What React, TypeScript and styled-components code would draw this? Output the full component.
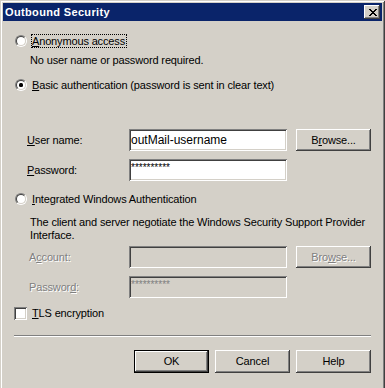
import React from "react";
import styled, { createGlobalStyle, css } from "styled-components";

const FACE = "#d4d0c8";
const SHADOW = "#808080";
const DARK = "#404040";
const TITLE = "#0a246a";

const GlobalStyle = createGlobalStyle`
  html, body { margin: 0; padding: 0; background: ${FACE}; overflow: hidden; }
  body {
    font-family: "Liberation Sans", Arial, sans-serif;
    font-size: 11px;
    letter-spacing: -0.15px;
    color: #000;
  }
  * { box-sizing: border-box; }
  u { text-underline-offset: 1px; }
`;

const raised = css`
  box-shadow: inset -1px -1px 0 ${DARK}, inset 1px 1px 0 #fff,
    inset -2px -2px 0 ${SHADOW}, inset 2px 2px 0 ${FACE};
`;

const sunken = css`
  box-shadow: inset 1px 1px 0 ${SHADOW}, inset -1px -1px 0 #fff,
    inset 2px 2px 0 ${DARK}, inset -2px -2px 0 ${FACE};
`;

const disabledText = css`
  color: ${SHADOW};
  text-shadow: 1px 1px 0 #fff;
`;

const Window = styled.div`
  width: 385px;
  height: 392px;
  padding: 3px;
  background: ${FACE};
  display: flex;
  flex-direction: column;
  box-shadow: inset 1px 1px 0 ${FACE}, inset -1px -1px 0 ${DARK},
    inset 2px 2px 0 #fff, inset -2px -2px 0 ${SHADOW};
`;

const TitleBar = styled.div`
  height: 18px;
  flex: none;
  background: ${TITLE};
  display: flex;
  align-items: center;
  justify-content: space-between;
  padding: 0 2px;
`;

const Title = styled.span`
  color: #fff;
  font-weight: bold;
  font-size: 11px;
  letter-spacing: 0.35px;
  line-height: 18px;
`;

const CloseButton = styled.div`
  width: 16px;
  height: 14px;
  background: ${FACE};
  ${raised};
  display: flex;
  align-items: center;
  justify-content: center;
  padding-left: 1px;
`;

const Client = styled.div`
  display: flex;
  flex-direction: column;
  padding: 0 11px;
`;

const OptionRow = styled.div<{ $mt: number }>`
  display: flex;
  align-items: center;
  height: 16px;
  margin-top: ${(p) => p.$mt}px;
`;

const RadioOuter = styled.span`
  flex: none;
  width: 12px;
  height: 12px;
  margin-left: 1px;
  border-radius: 50%;
  border: 1px solid;
  border-color: ${SHADOW} #fff #fff ${SHADOW};
  display: flex;
`;

const RadioInner = styled.span`
  width: 10px;
  height: 10px;
  border-radius: 50%;
  border: 1px solid;
  border-color: ${DARK} ${FACE} ${FACE} ${DARK};
  background: #fff;
  display: flex;
  align-items: center;
  justify-content: center;
`;

const RadioDot = styled.span`
  width: 4px;
  height: 4px;
  border-radius: 1.5px;
  background: #000;
`;

const CheckBox = styled.span`
  flex: none;
  width: 13px;
  height: 13px;
  background: #fff;
  ${sunken};
`;

const OptionLabel = styled.span<{ $focused?: boolean }>`
  margin-left: 4px;
  padding: 1px 1px;
  line-height: 12px;
  white-space: nowrap;
  ${(p) =>
    p.$focused &&
    css`
      outline: 1px dotted #000;
      outline-offset: -1px;
      padding: 1px 2px 1px 1px;
    `}
`;

const Description = styled.div<{ $mt: number }>`
  margin-top: ${(p) => p.$mt}px;
  margin-left: 16px;
  width: 341px;
  line-height: 13px;
`;

const FieldRow = styled.div<{ $mt: number; $indent: number }>`
  display: flex;
  align-items: center;
  height: 22px;
  margin-top: ${(p) => p.$mt}px;
  padding-left: ${(p) => p.$indent}px;
`;

const FieldLabel = styled.span<{ $w: number; $disabled?: boolean }>`
  flex: none;
  width: ${(p) => p.$w}px;
  line-height: 13px;
  ${(p) => p.$disabled && disabledText};
`;

const TextBox = styled.div<{ $disabled?: boolean }>`
  flex: none;
  width: 158px;
  height: 22px;
  ${sunken};
  background: ${(p) => (p.$disabled ? FACE : "#fff")};
  padding: 0 2px;
  display: flex;
  align-items: center;
  font-size: 12px;
  letter-spacing: 0;
`;

const PasswordBox = styled(TextBox)`
  align-items: flex-start;
  padding-top: 4px;
`;

const Masked = styled.span<{ $disabled?: boolean }>`
  font-size: 10px;
  line-height: 10px;
  letter-spacing: 0;
  color: ${(p) => (p.$disabled ? SHADOW : "#000")};
`;

const PushButton = styled.div<{ $h: number; $default?: boolean; $disabled?: boolean }>`
  flex: none;
  width: 75px;
  height: ${(p) => p.$h}px;
  background: ${FACE};
  display: flex;
  align-items: center;
  justify-content: center;
  line-height: 13px;
  ${raised};
  ${(p) =>
    p.$default &&
    css`
      box-shadow: inset 0 0 0 1px #000, inset -2px -2px 0 ${DARK},
        inset 2px 2px 0 #fff, inset -3px -3px 0 ${SHADOW};
    `}
  ${(p) => p.$disabled && disabledText};
`;

const SideButton = styled(PushButton)`
  margin-left: 9px;
`;

const Separator = styled.div`
  margin-top: 14px;
  height: 2px;
  border-top: 1px solid ${SHADOW};
  border-bottom: 1px solid #fff;
`;

const ButtonBar = styled.div`
  display: flex;
  justify-content: flex-end;
  gap: 6px;
  margin-top: 13px;
`;

const CloseGlyph = () => (
  <svg width="8" height="7" viewBox="0 0 8 7" shapeRendering="crispEdges">
    <path
      fill="#000"
      d="M0 0h2v1H0zM6 0h2v1H6zM1 1h2v1H1zM5 1h2v1H5zM2 2h4v1H2zM3 3h2v1H3zM2 4h4v1H2zM1 5h2v1H1zM5 5h2v1H5zM0 6h2v1H0zM6 6h2v1H6z"
    />
  </svg>
);

const Radio = ({ checked }: { checked?: boolean }) => (
  <RadioOuter>
    <RadioInner>{checked && <RadioDot />}</RadioInner>
  </RadioOuter>
);

export default function App() {
  return (
    <>
      <GlobalStyle />
      <Window>
        <TitleBar>
          <Title>Outbound Security</Title>
          <CloseButton>
            <CloseGlyph />
          </CloseButton>
        </TitleBar>
        <Client>
          <OptionRow $mt={12}>
            <Radio />
            <OptionLabel $focused>
              <u>A</u>nonymous access
            </OptionLabel>
          </OptionRow>
          <Description $mt={5}>No user name or password required.</Description>

          <OptionRow $mt={10}>
            <Radio checked />
            <OptionLabel>
              <u>B</u>asic authentication (password is sent in clear text)
            </OptionLabel>
          </OptionRow>

          <FieldRow $mt={36} $indent={13}>
            <FieldLabel $w={102}>
              <u>U</u>ser name:
            </FieldLabel>
            <TextBox>outMail-username</TextBox>
            <SideButton $h={22}>
              B<u>r</u>owse...
            </SideButton>
          </FieldRow>
          <FieldRow $mt={8} $indent={13}>
            <FieldLabel $w={102}>
              <u>P</u>assword:
            </FieldLabel>
            <PasswordBox>
              <Masked>**********</Masked>
            </PasswordBox>
          </FieldRow>

          <OptionRow $mt={10}>
            <Radio />
            <OptionLabel>
              <u>I</u>ntegrated Windows Authentication
            </OptionLabel>
          </OptionRow>
          <Description $mt={9}>
            The client and server negotiate the Windows Security Support Provider
            Interface.
          </Description>

          <FieldRow $mt={4} $indent={15}>
            <FieldLabel $w={100} $disabled>
              A<u>c</u>count:
            </FieldLabel>
            <TextBox $disabled />
            <SideButton $h={22} $disabled>
              Bro<u>w</u>se...
            </SideButton>
          </FieldRow>
          <FieldRow $mt={8} $indent={15}>
            <FieldLabel $w={100} $disabled>
              Passwor<u>d</u>:
            </FieldLabel>
            <PasswordBox $disabled>
              <Masked $disabled>**********</Masked>
            </PasswordBox>
          </FieldRow>

          <OptionRow $mt={7}>
            <CheckBox />
            <OptionLabel>
              <u>T</u>LS encryption
            </OptionLabel>
          </OptionRow>

          <Separator />

          <ButtonBar>
            <PushButton $h={23} $default>
              OK
            </PushButton>
            <PushButton $h={23}>Cancel</PushButton>
            <PushButton $h={23}>Help</PushButton>
          </ButtonBar>
        </Client>
      </Window>
    </>
  );
}
